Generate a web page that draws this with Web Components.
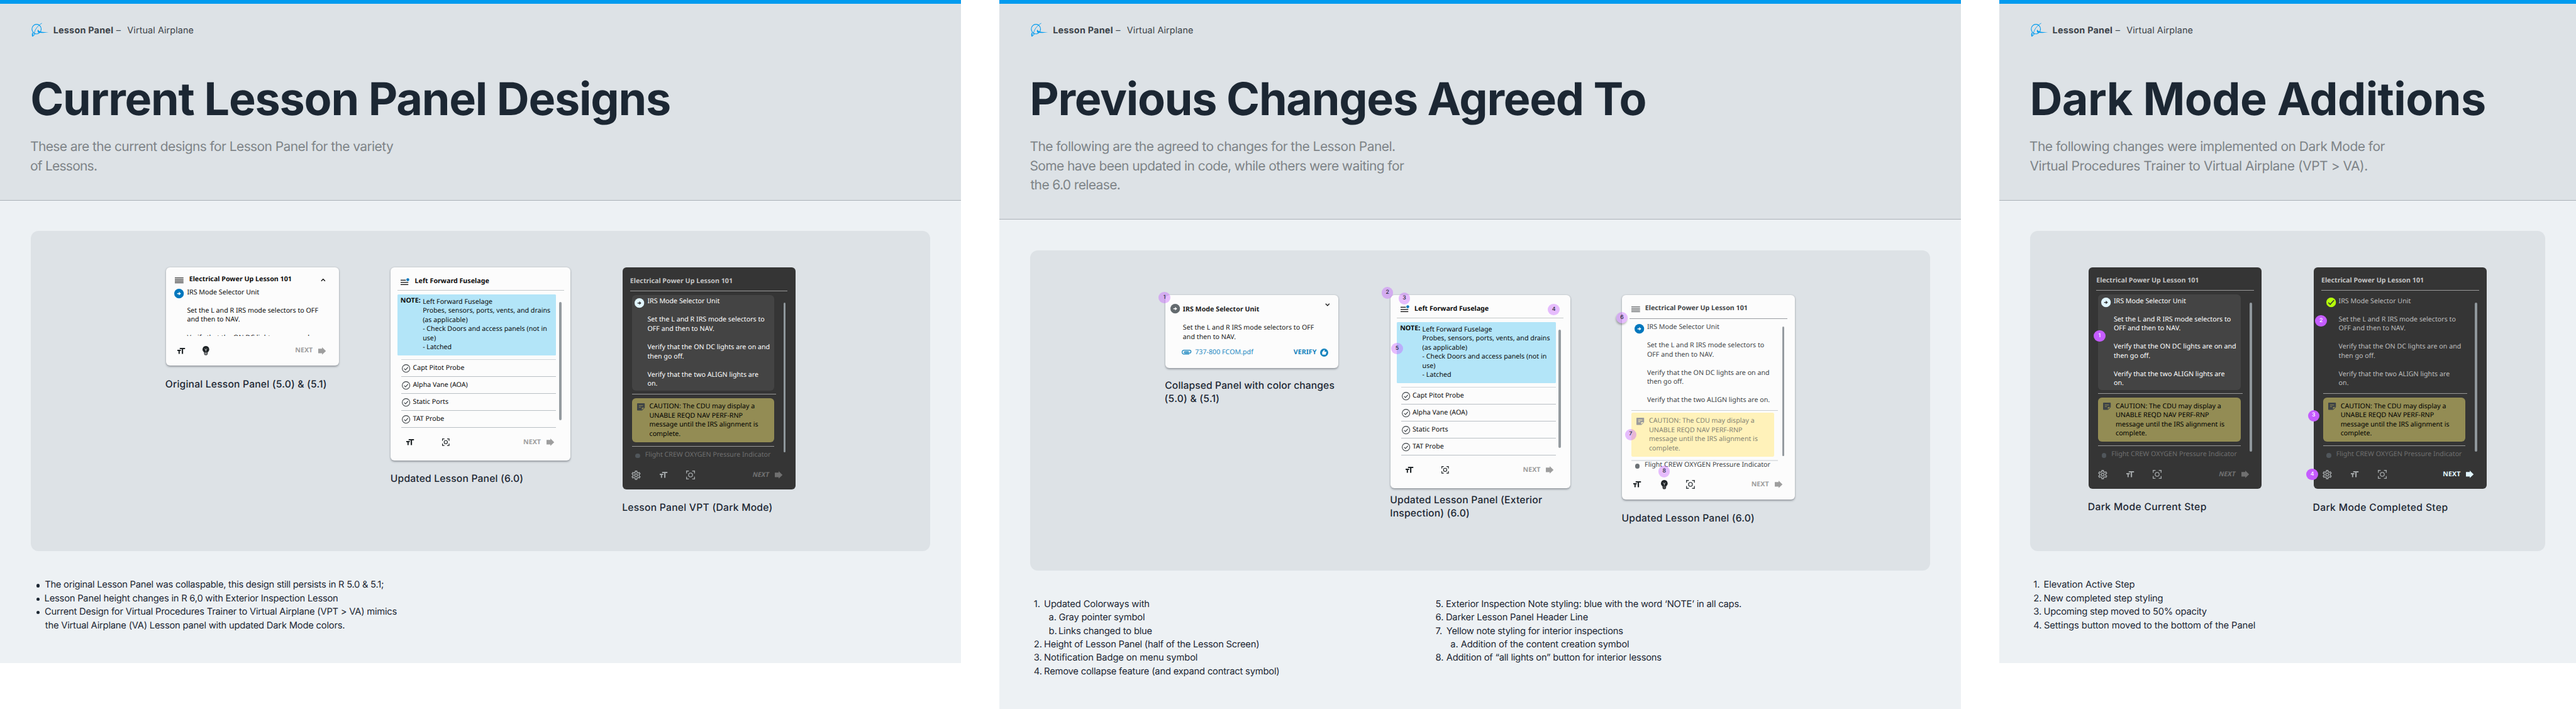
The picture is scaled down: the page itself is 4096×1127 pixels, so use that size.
<!DOCTYPE html>
<html lang="en">
<head>
<meta charset="utf-8">
<title>Lesson Panel</title>
<style>
html,body{margin:0;background:#fff;overflow:hidden}
</style>
</head>
<body>
<lesson-page></lesson-page>
<script>
const BASE = `
:host{display:block;box-sizing:border-box}
*,*::before,*::after{box-sizing:border-box}
p{margin:0}
`;
function define(name, css, html, extra) {
  customElements.define(name, class extends HTMLElement {
    connectedCallback() {
      if (this.shadowRoot) return;
      const root = this.attachShadow({ mode: 'open' });
      root.innerHTML = `<style>${BASE}${css}</style>${typeof html === 'function' ? html(this) : html}`;
      if (extra) extra(this, root);
    }
  });
}

/* One line of display text whose tracking is set so that its ink spans "w" px. */
const pen = document.createElement('canvas').getContext('2d');
define('fit-line', `:host{display:block;white-space:nowrap;width:max-content}`, '<slot></slot>', el => {
  const cs = getComputedStyle(el);
  const size = parseFloat(cs.getPropertyValue('--s'));
  const text = el.textContent;
  pen.font = `${cs.fontWeight} ${size * 10}px Inter`;
  const m = pen.measureText(text);
  const left = m.actualBoundingBoxLeft / 10, ink = left + m.actualBoundingBoxRight / 10;
  el.style.marginLeft = left.toFixed(2) + 'px';
  if (el.hasAttribute('w'))
    el.style.letterSpacing = ((+el.getAttribute('w') - ink) / (text.length - 1)).toFixed(3) + 'px';
});

const ICONS = {
  menu4: [18, 12, '<path d="M0 .9H18M0 4.3H18M0 7.7H18M0 11.1H18" stroke="currentColor" stroke-width="1.4" fill="none"/>'],
  menu3: [19, 15, '<path d="M0 4.4H11M0 9H16M0 13.6H16" stroke="currentColor" stroke-width="1.5" fill="none"/><circle cx="15" cy="3.4" r="3" fill="#0077bd"/>'],
  up: [10, 6, '<path d="M1 5L5 1L9 5" stroke="currentColor" stroke-width="1.7" fill="none"/>'],
  down: [10, 6, '<path d="M1 1L5 5L9 1" stroke="currentColor" stroke-width="1.7" fill="none"/>'],
  step: [20, 20, '<circle cx="10" cy="10" r="10" fill="currentColor"/><path d="M6.2 9H9.8V6.1L14 10L9.8 13.9V11H6.2Z" fill="var(--mark,#fff)"/>'],
  done: [20, 20, '<circle cx="10" cy="10" r="10" fill="#b5ff0a"/><path d="M4.2 10.4L8 14.2L16 5.6" stroke="#353535" stroke-width="2" fill="none"/>'],
  type: [16, 12.6, '<path d="M5 0H16V2.6H12V12.6H9.2V2.6H5ZM0 4H7.4V6.4H5V12.6H2.4V6.4H0Z" fill="currentColor"/>'],
  bulb: [14, 19, '<path d="M7 0a7 7 0 0 0-4 12.7V14h8v-1.3A7 7 0 0 0 7 0Z" fill="currentColor"/><path d="M4.8 5.6L7 8.2L9.2 5.6M7 8.2V11" stroke="#fcfcfc" stroke-width="1.1" fill="none"/><path d="M3.4 14H10.6V17L9 19H5L3.4 17Z" fill="currentColor"/><path d="M4.6 14.6H9.4M4.6 16.8H9.4" stroke="var(--rib,#fcfcfc)" stroke-width="1"/>'],
  focus: [16, 16, '<path d="M.8 5V.8H5M11 .8H15.2V5M15.2 11V15.2H11M5 15.2H.8V11" stroke="currentColor" stroke-width="1.6" fill="none"/><circle cx="8" cy="8" r="3.6" stroke="currentColor" stroke-width="1.5" fill="none"/>'],
  arrow: [16, 15.5, '<path d="M0 3H8V0L16 7.75L8 15.5V12.5H0Z" fill="currentColor"/>'],
  check: [17.4, 17.4, '<circle cx="8.7" cy="8.7" r="7.9" stroke="currentColor" stroke-width="1.4" fill="none"/><path d="M4.7 9L7.6 11.7L12.9 6" stroke="currentColor" stroke-width="1.4" fill="none"/>'],
  note: [16, 15, '<path d="M1.2 0H14.8Q16 0 16 1.2V9.6L10.4 15H1.2Q0 15 0 13.8V1.2Q0 0 1.2 0Z" fill="currentColor"/><path d="M3.8 4.9H12.2M3.8 8.2H8" stroke="var(--paper)" stroke-width="1.3"/><path d="M10 13.8V9.2H14.8Z" fill="var(--paper)"/>'],
  clip: [20, 10, '<path d="M15.6 9.1H5A4.1 4.1 0 0 1 5 .9H16.3A2.9 2.9 0 0 1 16.3 6.8H6.8A1.55 1.55 0 0 1 6.8 3.6H14.6" stroke="currentColor" stroke-width="1.6" fill="none"/><path d="M6.8 5.2H15" stroke="currentColor" stroke-width="1.4"/>'],
  thumb: [17, 17, '<circle cx="8.5" cy="8.5" r="8.5" fill="currentColor"/><path d="M4.3 7.6L8.7 2.6L9.7 3.5L9.1 6.7H12.4Q13.4 6.9 13.1 8L11.9 12Q11.6 12.8 10.8 12.8H6Q4.3 12.8 4.3 11Z" fill="#fcfcfc"/>'],
  gear: [20, 20, '<path transform="translate(-2 -2)" fill="currentColor" d="M19.43 12.98c.04-.32.07-.64.07-.98 0-.34-.03-.66-.07-.98l2.11-1.65c.19-.15.24-.42.12-.64l-2-3.46c-.09-.16-.26-.25-.44-.25-.06 0-.12.01-.17.03l-2.49 1c-.52-.4-1.08-.73-1.69-.98l-.38-2.65C14.46 2.18 14.25 2 14 2h-4c-.25 0-.46.18-.49.42l-.38 2.65c-.61.25-1.17.59-1.69.98l-2.49-1c-.06-.02-.12-.03-.18-.03-.17 0-.34.09-.43.25l-2 3.46c-.13.22-.07.49.12.64l2.11 1.65c-.04.32-.07.65-.07.98 0 .33.03.66.07.98l-2.11 1.65c-.19.15-.24.42-.12.64l2 3.46c.09.16.26.25.44.25.06 0 .12-.01.17-.03l2.49-1c.52.4 1.08.73 1.69.98l.38 2.65c.03.24.24.42.49.42h4c.25 0 .46-.18.49-.42l.38-2.65c.61-.25 1.17-.59 1.69-.98l2.49 1c.06.02.12.03.18.03.17 0 .34-.09.43-.25l2-3.46c.12-.22.07-.49-.12-.64l-2.11-1.65zm-1.98-1.71c.04.31.05.52.05.73 0 .21-.02.43-.05.73l-.14 1.13.89.7 1.08.84-.7 1.21-1.27-.51-1.04-.42-.9.68c-.43.32-.84.56-1.25.73l-1.06.43-.16 1.13-.2 1.35h-1.4l-.19-1.35-.16-1.13-1.06-.43c-.43-.18-.83-.41-1.23-.71l-.91-.7-1.06.43-1.27.51-.7-1.21 1.08-.84.89-.7-.14-1.13c-.03-.31-.05-.54-.05-.74s.02-.43.05-.73l.14-1.13-.89-.7-1.08-.84.7-1.21 1.27.51 1.04.42.9-.68c.43-.32.84-.56 1.25-.73l1.06-.43.16-1.13.2-1.35h1.39l.19 1.35.16 1.13 1.06.43c.43.18.83.41 1.23.71l.91.7 1.06-.43 1.27-.51.7 1.21-1.07.85-.89.7.14 1.13zM12 8c-2.21 0-4 1.79-4 4s1.79 4 4 4 4-1.79 4-4-1.79-4-4-4zm0 6c-1.1 0-2-.9-2-2s.9-2 2-2 2 .9 2 2-.9 2-2 2z"/>'],
  logo: [37, 30, '<g fill="none" stroke="#009bef"><ellipse cx="12" cy="13.5" rx="9.6" ry="10" stroke-width="1.5"/><path d="M23 1.2C15 6 8.5 13.5 7 22.5" stroke-width="1.2"/><path d="M7 22.5Q3 25.5 3.4 28.3Q7 27.5 9.5 22.5" stroke-width="1.3"/></g><path d="M3 20.5Q1.6 25 2.6 28.6L5 28.6Q3.6 25 4.4 21Z" fill="#009bef"/><path d="M14.5 14.5C17 18.8 22 19.6 37 20.2C28 21.2 20 21.6 15 20.6C14 18 14 16.5 14.5 14.5Z" fill="#009bef"/>']
};
define('ui-icon', `:host{display:block;flex:none}svg{display:block;width:100%;height:100%;overflow:visible}`, el => {
  const [w, h, body] = ICONS[el.getAttribute('name')];
  const k = +(el.getAttribute('width') || w);
  el.style.width = k + 'px';
  el.style.height = (k * h / w) + 'px';
  return `<svg viewBox="0 0 ${w} ${h}">${body}</svg>`;
});

/* Round callout marker; x and y give its centre over the card. */
define('num-badge', `
:host{position:absolute;width:24px;height:24px;margin:-12px 0 0 -12px;border-radius:50%;display:grid;place-items:center;
  font:500 11.5px/1 Inter,sans-serif;background:#c55cff;color:#fff}
:host([soft]){background:rgba(197,92,255,.4);color:#1c2733}
:host([lifted]){box-shadow:-1px 3px 4px rgba(0,0,0,.28)}
`, '<slot></slot>', el => {
  el.style.left = el.getAttribute('x') + 'px';
  el.style.top = el.getAttribute('y') + 'px';
});

const CARD = `
:host{position:relative;display:flex;flex-direction:column;width:360px;border-radius:8px;background:#fcfcfc;color:#0b0b0b;
  font:400 14px/19px "Noto Sans",sans-serif;box-shadow:0 2px 4px rgba(20,25,35,.34),0 0 3px rgba(20,25,35,.08);text-rendering:geometricPrecision}
p{white-space:nowrap}
.row{display:flex;align-items:center;height:19px;flex:none}
.row b,.row p{white-space:nowrap}
.rule{flex:none;background:#bcc2c6;height:1.3px}
.bar{position:absolute;width:4.8px;border-radius:3px;background:#959ba0}
.next{color:#9e9e9e;font-weight:700;width:36px;margin-left:auto}
.foot ui-icon{color:#202528}
.foot .go{color:#9e9e9e}
.step{display:flex;align-items:flex-start}
`;

define('card-original', CARD + `
:host{height:204px}
.head{margin:15.7px 27px 0 19px}.head b{margin-left:11.5px}.head .chev{margin-left:auto}
.step{margin:7.3px 0 0 18px;height:99.5px;overflow:hidden;gap:6.2px}
.foot{margin:21.8px 26.5px 0 24.5px}
`, `
<div class="row head"><ui-icon name="menu4" style="margin-top:3px"></ui-icon><b>Electrical Power Up Lesson 101</b><ui-icon name="up" class="chev" style="margin-top:2px"></ui-icon></div>
<div class="step"><ui-icon name="step" style="color:#0077bd;margin-top:2px"></ui-icon>
<p>IRS Mode Selector Unit<br><br>Set the L and R IRS mode selectors to OFF<br>and then to NAV.<br><br>Verify that the ON DC lights are on and</p></div>
<div class="row foot"><ui-icon name="type"></ui-icon><ui-icon name="bulb" style="margin-left:35.5px"></ui-icon><p class="next">NEXT</p><ui-icon name="arrow" class="go" style="margin-left:12.5px"></ui-icon></div>`);

define('card-exterior', CARD + `
:host{width:374px;height:401px}
.head{margin:19px 0 0 21px}.head b{margin-left:10.2px}
.note{display:flex;margin:7.8px 0 0 14px;width:330px;height:127.7px;background:#b3e5f8;border-radius:2px;padding-left:6.2px;flex:none}
.note b{margin-top:4.7px;width:46.4px}.note p{margin-top:6.7px}
.list{margin:7.8px 30px 0 22px;border-top:1.3px solid #cfd4d7}
.item{height:35.3px;display:flex;align-items:center;border-bottom:1.3px solid #b9bfc4;padding-left:1.8px;gap:5px}
.item ui-icon{color:#3b4145;margin-top:1px}
.foot{margin:20.7px 34px 0 32px}
`, `
<div class="row head"><ui-icon name="menu3"></ui-icon><b>Left Forward Fuselage</b></div>
<div class="rule" style="margin:8.2px 13.3px 0 14px;background:#c4c8ca"></div>
<div class="note"><b>NOTE:</b><p>Left Forward Fuselage<br>Probes, sensors, ports, vents, and drains<br>(as applicable)<br>- Check Doors and access panels (not in<br>use)<br>- Latched</p></div>
<div class="list">${['Capt Pitot Probe', 'Alpha Vane (AOA)', 'Static Ports', 'TAT Probe'].map(t => `<div class="item"><ui-icon name="check"></ui-icon><p>${t}</p></div>`).join('')}</div>
<div class="row foot"><ui-icon name="type"></ui-icon><ui-icon name="focus" width="15.3" style="margin-left:59px"></ui-icon><p class="next">NEXT</p><ui-icon name="arrow" class="go" style="margin-left:12.3px"></ui-icon></div>
<div class="bar" style="left:350.3px;top:71px;height:246px"></div><slot></slot>`);

define('card-interior', CARD + `
:host{height:425px;color:#414548}
.head{margin:18.4px 0 0 19px}.head b{margin-left:11px}
.step{margin:7.7px 0 0 26px;gap:6.2px}
.note{display:flex;margin:3.7px 0 0 20px;width:296px;height:91.6px;background:#fff2ba;border-radius:3px;padding:8px 0 0 10px;color:#858473;flex:none;--paper:#fff2ba}
.next-step{margin:-.3px 0 0 27px}
.foot{margin:20.6px 26.7px 0 24px}
`, `
<div class="row head"><ui-icon name="menu4" style="margin-top:1px"></ui-icon><b>Electrical Power Up Lesson 101</b></div>
<div class="rule" style="margin:10.3px 16px 0;height:2px;background:#9a9da2"></div>
<div class="step"><ui-icon name="step" style="color:#0077bd;margin-top:2px"></ui-icon>
<p>IRS Mode Selector Unit<br><br>Set the L and R IRS mode selectors to<br>OFF and then to NAV.<br><br>Verify that the ON DC lights are on and<br>then go off.<br><br>Verify that the two ALIGN lights are on.</p></div>
<div class="rule" style="margin:10.3px 36px 0 20px;height:2px;background:#c9ced2"></div>
<div class="note"><ui-icon name="note" style="color:#9c9c9c;margin:2.6px 10.2px 0 0"></ui-icon><p>CAUTION: The CDU may display a<br>UNABLE REQD NAV PERF-RNP<br>message until the IRS alignment is<br>complete.</p></div>
<div class="rule" style="margin:6.7px 36px 0 20px;height:2px;background:#e0e3e6"></div>
<div class="row next-step"><span style="width:10px;height:10px;border-radius:50%;background:#6c7276;margin:3px 10.2px 0 0"></span><p>Flight CREW OXYGEN Pressure Indicator</p></div>
<div class="row foot"><ui-icon name="type"></ui-icon><ui-icon name="bulb" style="margin-left:41.2px;--rib:#777"></ui-icon><ui-icon name="focus" width="18.2" style="margin-left:38px;color:#3b4145"></ui-icon><p class="next">NEXT</p><ui-icon name="arrow" class="go" style="margin-left:12.3px"></ui-icon></div>
<div class="bar" style="left:333.3px;top:65px;height:270px"></div><slot></slot>`);

define('card-collapsed', CARD + `
:host{height:151px;color:#1a1a1a}
.head{margin:20.4px 18px 0 10px}.head b{margin-left:6.2px}
.body{margin:19px 0 0 36.3px}
.foot{margin:13.6px 21.6px 0 34px}
.foot ui-icon{color:#1583bd}
`, `
<div class="row head"><ui-icon name="step" style="color:#636a6e;margin-top:-3px"></ui-icon><b>IRS Mode Selector Unit</b><ui-icon name="down" style="margin:-21px 0 0 auto"></ui-icon></div>
<p class="body">Set the L and R IRS mode selectors to OFF<br>and then to NAV.</p>
<div class="row foot"><ui-icon name="clip" style="margin-top:-2px"></ui-icon><p style="margin-left:7.6px;color:#2489c2">737-800 FCOM.pdf</p><b style="margin:-2px 0 0 auto;color:#1583bd">VERIFY</b><ui-icon name="thumb" style="margin:-1px 0 0 7px"></ui-icon></div>
<slot></slot>`);

define('card-dark', CARD + `
:host{height:461px;background:#353535;color:#fff;box-shadow:none}
:host([done]) .step{color:#bdbdbd;background:none}
.head{margin:18.4px 0 0 16px;color:#c4c4c4}
.rule{height:1.3px;background:#999}
.step{margin:8px 0 0 20px;width:296px;height:198px;border-radius:8px;background:#444;padding:4.2px 0 0 6px;gap:6.2px;--mark:#353535}
.note{display:flex;margin:8px 0 0 20px;width:296px;height:91.7px;background:#938c54;border-radius:8px;padding:8.4px 0 0 10px;color:#000;flex:none;--paper:#938c54}
.next-step{margin:8.2px 0 0 27px;color:#6f6f6f}
.foot{margin:22.8px 26.7px 0 19px}
.foot ui-icon{color:#a2a6a8}
.next,.foot .go{color:#707070}.next{font-style:italic;width:34px}
:host([done]) .next{color:#e1f5fe;font-style:normal;width:36px}:host([done]) .foot .go{color:#e1f5fe}
`, el => `
<div class="row head"><b>Electrical Power Up Lesson 101</b></div>
<div class="rule" style="margin:10.6px 16px 0"></div>
<div class="step"><ui-icon name="${el.hasAttribute('done') ? 'done' : 'step'}" style="color:#e1f5fe;margin-top:2px"></ui-icon>
<p>IRS Mode Selector Unit<br><br>Set the L and R IRS mode selectors to<br>OFF and then to NAV.<br><br>Verify that the ON DC lights are on and<br>then go off.<br><br>Verify that the two ALIGN lights are<br>on.</p></div>
<div class="rule" style="margin:7px 40px 0 20px"></div>
<div class="note"><ui-icon name="note" style="color:#3f4447;margin:1.8px 10.2px 0 0"></ui-icon><p>CAUTION: The CDU may display a<br>UNABLE REQD NAV PERF-RNP<br>message until the IRS alignment is<br>complete.</p></div>
<div class="rule" style="margin:7.2px 44px 0 20px"></div>
<div class="row next-step"><span style="width:10px;height:10px;border-radius:50%;background:#50565b;margin:4px 10.2px 0 0"></span><p>Flight CREW OXYGEN Pressure Indicator</p></div>
<div class="row foot"><ui-icon name="gear" width="19.4"></ui-icon><ui-icon name="type" style="margin-left:39.6px"></ui-icon><ui-icon name="focus" width="18.4" style="margin-left:39.4px"></ui-icon><p class="next">NEXT</p><ui-icon name="arrow" class="go" style="margin-left:12.3px"></ui-icon></div>
<div class="bar" style="left:335.3px;top:73px;height:311px;background:#8f979c"></div><slot></slot>`);

/* A card with its caption below. */
define('panel-figure', `
:host{display:flex;flex-direction:column;align-items:flex-start;flex:none}
.cap{margin-top:var(--cap,24px);--s:20.5;font:500 20.5px/28px Inter,sans-serif;color:#1c2733;width:0}
`, '<slot name="card"></slot><div class="cap"><slot></slot></div>');

define('board-frame', `
:host{flex:none;background:#edf1f4;display:flex;flex-direction:column}
header{background:#dde2e6;border-top:8px solid #009bef;border-bottom:1.3px solid #aab1b7;padding:0 64px;flex:none}
.crumb{display:flex;align-items:center;height:24px;margin-top:44px;--s:18.8;font:400 18.8px/24px Inter,sans-serif;color:#3c4349}
.crumb .b{font-weight:650;width:131px}
.crumb .d{width:23.4px}
h1{margin:74.7px 0 0;--s:94;font:650 94px/112px Inter,sans-serif;color:#1c2733}
.sub{margin-top:24px;padding-bottom:49px;--s:27.5;font:400 27.5px/40px Inter,sans-serif;color:#7e8488}
.stage{margin:64px 64px 0;height:666px;border-radius:16px;background:#dde2e6;display:flex;justify-content:center;align-items:flex-start;gap:108px;padding-top:var(--pt,76px);flex:none}
.notes{display:grid;grid-template-columns:836px 836px;margin:56.3px 0 0 64px}
`, `
<header>
<div class="crumb"><ui-icon name="logo" style="margin:-3px 11px 0 0"></ui-icon><fit-line class="b" w="122.6">Lesson Panel</fit-line><fit-line class="d">–</fit-line><fit-line w="137">Virtual Airplane</fit-line></div>
<h1><slot name="title"></slot></h1>
<div class="sub"><slot name="sub"></slot></div>
</header>
<div class="stage"><slot></slot></div>
<div class="notes"><slot name="notes"></slot></div>`);

define('note-list', `:host{display:flex;flex-direction:column;--s:19.3;font:400 19.3px/28px Inter,sans-serif;color:#1c2733}`, '<slot></slot>');
define('note-item', `
:host{display:flex;height:28px}
:host([sub]){padding-left:31px}
.m{width:23px;margin-left:7px;flex:none;white-space:nowrap}
:host([sub]) .m{width:22px}
.dot{width:7px;height:7px;border-radius:50%;background:#1c2733;margin:11.6px 0 0 5px}
`, el => `<span class="m">${el.getAttribute('m') ? el.getAttribute('m') + '.' : '<div class="dot"></div>'}</span><slot></slot>`);

const li = (m, w, t, sub) => `<note-item ${m ? `m="${m}"` : ''} ${sub ? 'sub' : ''}><fit-line w="${w}">${t}</fit-line></note-item>`;
const cont = (w, t) => `<fit-line style="padding-left:30px" w="${w}">${t}</fit-line>`;
const bd = (n, x, y, a = '') => `<num-badge x="${x}" y="${y}" ${a}>${n}</num-badge>`;

define('lesson-page', `
:host{display:flex;align-items:flex-start;gap:80px;width:5360px;height:1475px;overflow:hidden;zoom:.764179;background:#fff;text-rendering:geometricPrecision}
`, `
<board-frame style="width:2000px;height:1379px">
<fit-line slot="title" style="padding-left:2px" w="1328">Current Lesson Panel Designs</fit-line>
<fit-line slot="sub" w="755">These are the current designs for Lesson Panel for the variety</fit-line>
<fit-line slot="sub" w="137">of Lessons.</fit-line>
<panel-figure><card-original slot="card"></card-original><fit-line w="333">Original Lesson Panel (5.0) &amp; (5.1)</fit-line></panel-figure>
<panel-figure><card-exterior slot="card"></card-exterior><fit-line style="padding-left:1px" w="273">Updated Lesson Panel (6.0)</fit-line></panel-figure>
<panel-figure><card-dark slot="card"></card-dark><fit-line style="padding-left:1px" w="309.5">Lesson Panel VPT (Dark Mode)</fit-line></panel-figure>
<note-list slot="notes">
${li('', 704, 'The original Lesson Panel was collaspable, this design still persists in R 5.0 &amp; 5.1;')}
${li('', 609, 'Lesson Panel height changes in R 6,0 with Exterior Inspection Lesson')}
${li('', 732, 'Current Design for Virtual Procedures Trainer to Virtual Airplane (VPT &gt; VA) mimics')}
${cont(623, 'the Virtual Airplane (VA) Lesson panel with updated Dark Mode colors.')}
</note-list>
</board-frame>
<board-frame style="width:2000px;height:1475px;--pt:93.5px">
<fit-line slot="title" style="padding-left:4.5px" w="1275">Previous Changes Agreed To</fit-line>
<fit-line slot="sub" w="758.5">The following are the agreed to changes for the Lesson Panel.</fit-line>
<fit-line slot="sub" w="778">Some have been updated in code, while others were waiting for</fit-line>
<fit-line slot="sub" w="186">the 6.0 release.</fit-line>
<panel-figure style="--cap:22.5px"><card-collapsed slot="card">${bd(1, -2, 5, 'soft')}</card-collapsed><fit-line w="351">Collapsed Panel with color changes</fit-line><fit-line w="110.5">(5.0) &amp; (5.1)</fit-line></panel-figure>
<panel-figure style="--cap:10.3px"><card-exterior slot="card">${bd(2, -6, -5.3, 'soft')}${bd(3, 29, 6.7, 'soft')}${bd(4, 340, 29.7, 'soft')}${bd(5, 14, 110.7, 'soft')}</card-exterior><fit-line style="padding-left:1px" w="314.3">Updated Lesson Panel (Exterior</fit-line><fit-line style="padding-left:1px" w="162">Inspection) (6.0)</fit-line></panel-figure>
<panel-figure><card-interior slot="card">${bd(6, 0, 46.7, 'soft lifted')}${bd(7, 18, 289.7, 'soft')}${bd(8, 88, 366.7, 'soft')}</card-interior><fit-line style="padding-left:1px" w="273">Updated Lesson Panel (6.0)</fit-line></panel-figure>
<note-list slot="notes">
${li('1', 217, 'Updated Colorways with')}
${li('a', 177, 'Gray pointer symbol', 1)}
${li('b', 193, 'Links changed to blue', 1)}
${li('2', 445, 'Height of Lesson Panel (half of the Lesson Screen)')}
${li('3', 317, 'Notification Badge on menu symbol')}
${li('4', 487, 'Remove collapse feature (and expand contract symbol)')}
</note-list>
<note-list slot="notes">
${li('5', 613, 'Exterior Inspection Note styling: blue with the word ‘NOTE’ in all caps.')}
${li('6', 294, 'Darker Lesson Panel Header Line')}
${li('7', 367, 'Yellow note styling for interior inspections')}
${li('a', 349, 'Addition of the content creation symbol', 1)}
${li('8', 447, 'Addition of “all lights on” button for interior lessons')}
</note-list>
</board-frame>
<board-frame style="width:1200px;height:1379px;--pt:75px">
<fit-line slot="title" style="padding-left:5.5px" w="941">Dark Mode Additions</fit-line>
<fit-line slot="sub" w="739">The following changes were implemented on Dark Mode for</fit-line>
<fit-line slot="sub" w="702">Virtual Procedures Trainer to Virtual Airplane (VPT &gt; VA).</fit-line>
<panel-figure><card-dark slot="card">${bd(1, 22.7, 143)}</card-dark><fit-line w="244.3">Dark Mode Current Step</fit-line></panel-figure>
<panel-figure style="--cap:25.3px"><card-dark done slot="card">${bd(2, 15.6, 112)}${bd(3, 0, 309)}${bd(4, -2.8, 431)}</card-dark><fit-line w="278.6">Dark Mode Completed Step</fit-line></panel-figure>
<note-list slot="notes">
${li('1', 187.5, 'Elevation Active Step')}
${li('2', 246, 'New completed step styling')}
${li('3', 338, 'Upcoming step moved to 50% opacity')}
${li('4', 438, 'Settings button moved to the bottom of the Panel')}
</note-list>
</board-frame>`);
</script>
</body>
</html>
